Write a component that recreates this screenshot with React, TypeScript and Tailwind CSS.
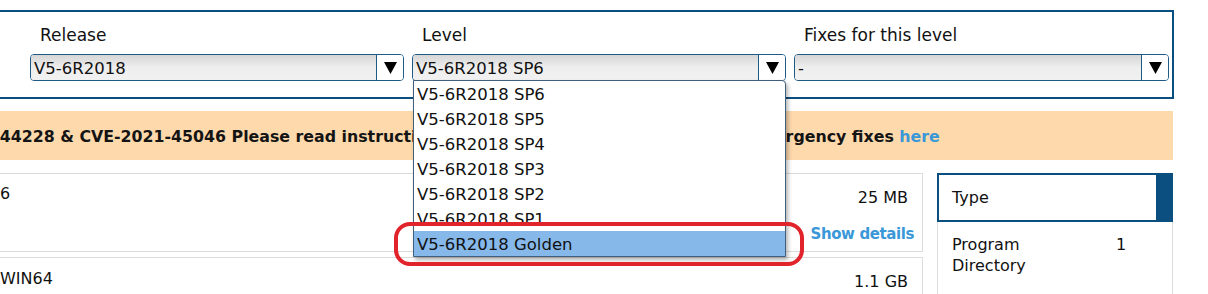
import React from 'react'

const levels = ['V5-6R2018 SP6', 'V5-6R2018 SP5', 'V5-6R2018 SP4', 'V5-6R2018 SP3', 'V5-6R2018 SP2']

const Arrow = () => (
  <svg width="13" height="13" viewBox="0 0 13 13">
    <polygon points="0,1 13,1 6.5,13" fill="#000" />
  </svg>
)

const Select = ({ value, width }: { value: string; width: string }) => (
  <div className={`flex h-[27px] overflow-hidden rounded-[4px] border border-[#1d5a86] ${width}`}>
    <div className="flex flex-1 items-center bg-gradient-to-b from-[#d6d6d6] via-[#eeeeee] to-[#f1f1f1] pl-[3px] pt-[4px] text-[16.5px] leading-none text-[#111]">
      {value}
    </div>
    <div className="flex w-[27px] items-center justify-center border-l border-[#1d5a86] bg-white">
      <Arrow />
    </div>
  </div>
)

const Field = ({ label, value, width }: { label: string; value: string; width: string }) => (
  <div className="flex flex-col">
    <div className="h-[42px] pl-[10px] pt-[13px] text-[17px] leading-[20px] text-[#111]">{label}</div>
    <Select value={value} width={width} />
  </div>
)

export default function App() {
  return (
    <div
      className="relative h-[294px] w-[1208px] overflow-hidden bg-white"
      style={{ fontFamily: '"DejaVu Sans", Verdana, sans-serif' }}
    >
      {/* Filter panel */}
      <div className="mt-[10px] flex h-[89px] w-[1174px] gap-[8px] border-y-2 border-r-2 border-[#0b4f80] pl-[30px]">
        <Field label="Release" value="V5-6R2018" width="w-[374px]" />
        <Field label="Level" value="V5-6R2018 SP6" width="w-[374px]" />
        <Field label="Fixes for this level" value="-" width="w-[375px]" />
      </div>

      {/* Notice banner */}
      <div className="mt-[12px] flex h-[49px] w-[1173px] items-center overflow-hidden whitespace-nowrap bg-[#fdd9ac] pt-[2px] text-[15.8px] font-bold text-[#141414]">
        <span className="ml-[-92px]">
          CVE-2021-44228 &amp; CVE-2021-45046 Please read instructions on how to download and get the emergency fixes{' '}
          <span className="text-[#3a98d8]">here</span>
        </span>
      </div>

      {/* Results */}
      <div className="mt-[13px] flex w-[1173px] gap-[14px]">
        <div className="flex flex-1 flex-col gap-[5px]">
          <div className="flex h-[79px] justify-between border-y border-r border-[#dcdcdc] pr-[8px] text-[16px] text-[#111]">
            <div className="pt-[8px]">6</div>
            <div className="flex flex-col items-end pt-[12px]">
              <div className="pr-[6px]">25 MB</div>
              <div className="mt-[13px] text-[15px] font-bold tracking-[-0.4px] text-[#3a98d8]">Show details</div>
            </div>
          </div>
          <div className="flex h-[60px] justify-between border-t border-r border-[#dcdcdc] pr-[14px] text-[16px] text-[#111]">
            <div className="pt-[9px]">WIN64</div>
            <div className="pt-[12px]">1.1 GB</div>
          </div>
        </div>

        <div className="flex w-[236px] flex-col">
          <div className="flex h-[49px] border-2 border-[#0b4f80]">
            <div className="flex flex-1 items-center pl-[13px] text-[16px] text-[#111]">Type</div>
            <div className="w-[15px] bg-[#0b4f80]" />
          </div>
          <div className="flex h-[80px] border-x border-[#dcdcdc] pl-[14px] pt-[12px] text-[16px] leading-[21px] text-[#111]">
            <div className="w-[164px]">
              Program
              <br />
              Directory
            </div>
            <div>1</div>
          </div>
        </div>
      </div>

      {/* Open dropdown list */}
      <div className="absolute left-[413px] top-[80px] w-[373px] rounded-tr-[4px] border border-[#3f5f7c] bg-white text-[16.5px] text-[#111] shadow-[2px_3px_4px_rgba(0,0,0,0.3)]">
        {levels.map((l) => (
          <div key={l} className="flex h-[25px] items-center pl-[3px] pt-[4px]">
            {l}
          </div>
        ))}
        <div className="h-[16px] overflow-hidden">
          <div className="flex h-[25px] items-center pl-[3px] pt-[4px]">V5-6R2018 SP1</div>
        </div>
        <div className="h-[9px]" />
        <div className="flex h-[25px] items-center bg-[#86b8ea] pl-[3px] pt-[3px]">V5-6R2018 Golden</div>
      </div>

      {/* Highlight annotation */}
      <div className="pointer-events-none absolute left-[394px] top-[222px] h-[44px] w-[410px] rounded-[16px] border-[4px] border-[#e1232b]" />
    </div>
  )
}
